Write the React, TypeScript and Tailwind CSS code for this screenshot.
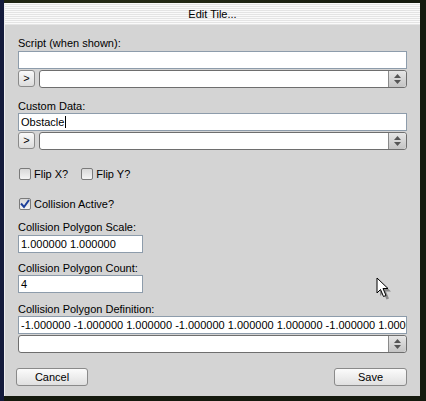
import type { ReactNode } from "react";

const font = { fontFamily: '"Liberation Sans", Arial, sans-serif' };

function Label({ children, className = "" }: { children: ReactNode; className?: string }) {
  return <div className={`h-[14px] text-[11px] leading-[14px] text-black ${className}`}>{children}</div>;
}

function TextBox({ value = "", className = "", caret = false }: { value?: string; className?: string; caret?: boolean }) {
  return (
    <div
      className={`flex h-[18px] items-center overflow-hidden whitespace-nowrap border border-[#8d9cab] bg-white pl-[2px] text-[11px] text-black ${className}`}
    >
      {value}
      {caret && <span className="ml-[1px] inline-block h-[12px] w-[1px] bg-black" />}
    </div>
  );
}

function Spinner() {
  return (
    <div className="flex h-full w-[18px] flex-col items-center justify-center gap-[2px] rounded-r-[3px] border-l border-[#8a8a8a] bg-gradient-to-b from-[#e6e6e6] to-[#c4c4c4]">
      <svg width="7" height="4" viewBox="0 0 7 4">
        <path d="M3.5 0 L7 4 L0 4 Z" fill="#555" />
      </svg>
      <svg width="7" height="4" viewBox="0 0 7 4">
        <path d="M0 0 L7 0 L3.5 4 Z" fill="#555" />
      </svg>
    </div>
  );
}

function Combo({ className = "" }: { className?: string }) {
  return (
    <div className={`flex h-[18px] rounded-[3px] border border-[#6e6e6e] bg-white ${className}`}>
      <div className="flex-1" />
      <Spinner />
    </div>
  );
}

function Arrow() {
  return (
    <div className="flex h-[17px] w-[17px] items-center justify-center rounded-[3px] border border-[#8a8a8a] bg-gradient-to-b from-[#fafafa] to-[#dcdcdc] text-[11px] text-black">
      &gt;
    </div>
  );
}

function Check({ label, checked = false, className = "" }: { label: string; checked?: boolean; className?: string }) {
  return (
    <div className={`flex items-center gap-[3px] ${className}`}>
      <div className="flex h-[12px] w-[12px] items-center justify-center rounded-[2px] border border-[#7a7a7a] bg-gradient-to-b from-[#d8d8d8] to-[#f4f4f4]">
        {checked && (
          <svg width="10" height="10" viewBox="0 0 10 10">
            <path d="M1 4.5 L4 8 L9 1" stroke="#1c3f9a" strokeWidth="2" fill="none" />
          </svg>
        )}
      </div>
      <span className="text-[11px] leading-[14px] text-black">{label}</span>
    </div>
  );
}

function PushButton({ children, className = "" }: { children: ReactNode; className?: string }) {
  return (
    <div
      className={`flex h-[18px] items-center justify-center rounded-[3px] border border-[#8a8a8a] bg-gradient-to-b from-[#fbfbfb] to-[#e0e0e0] text-[11px] text-black ${className}`}
    >
      {children}
    </div>
  );
}

function Pointer() {
  return (
    <svg className="absolute left-[376px] top-[277px]" width="16" height="24" viewBox="0 0 16 24">
      <path d="M2.5 2.5 L2.5 17.5 L6 14 L9 21 L11.5 20 L8.5 13 L13.5 13 Z" fill="#000" opacity="0.35" transform="translate(1.5 1.5)" />
      <path d="M1 1 L1 16 L4.5 12.5 L7.5 19.5 L10 18.5 L7 11.5 L12 11.5 Z" fill="#fff" stroke="#000" strokeWidth="1" />
    </svg>
  );
}

export default function App() {
  return (
    <div
      style={font}
      className="relative h-[401px] w-[426px] overflow-hidden bg-[#1b2112] bg-[radial-gradient(circle_at_30%_20%,#2a3018_0,#151a0e_60%)] pl-[4px] pt-[3px]"
    >
      <div className="absolute left-0 top-0 h-full w-[4px] bg-[#141b3c]" />
      <div className="relative flex h-[393px] w-[416px] flex-col border-l border-[#eeeeee] bg-[#d4d4d4]">
        <div className="flex h-[22px] items-center justify-center bg-[repeating-linear-gradient(to_bottom,#fafafa_0px,#fafafa_1px,#e4e4e4_1px,#e4e4e4_2px)] text-[11px] text-black">
          Edit Tile...
        </div>

        <div className="flex flex-col px-[13px]">
          <Label className="mt-[11px]">Script (when shown):</Label>
          <TextBox className="mt-[1px]" />
          <div className="mt-[1px] flex gap-[4px]">
            <Arrow />
            <Combo className="flex-1" />
          </div>

          <Label className="mt-[11px]">Custom Data:</Label>
          <TextBox value="Obstacle" caret />
          <div className="mt-[1px] flex gap-[4px]">
            <Arrow />
            <Combo className="flex-1" />
          </div>

          <div className="ml-[1px] mt-[17px] flex gap-[13px]">
            <Check label="Flip X?" />
            <Check label="Flip Y?" />
          </div>

          <Check label="Collision Active?" checked className="ml-[1px] mt-[16px]" />

          <Label className="mt-[9px]">Collision Polygon Scale:</Label>
          <TextBox value="1.000000 1.000000" className="mt-[1px] w-[125px]" />

          <Label className="mt-[8px]">Collision Polygon Count:</Label>
          <TextBox value="4" className="w-[125px]" />

          <Label className="mt-[9px] h-[13px]">Collision Polygon Definition:</Label>
          <TextBox value="-1.000000 -1.000000 1.000000 -1.000000 1.000000 1.000000 -1.000000 1.000000" />
          <Combo className="mt-[1px]" />

          <div className="mt-[15px] flex justify-between">
            <PushButton className="-ml-[2px] w-[72px]">Cancel</PushButton>
            <PushButton className="w-[73px]">Save</PushButton>
          </div>
        </div>
      </div>
      <Pointer />
    </div>
  );
}
